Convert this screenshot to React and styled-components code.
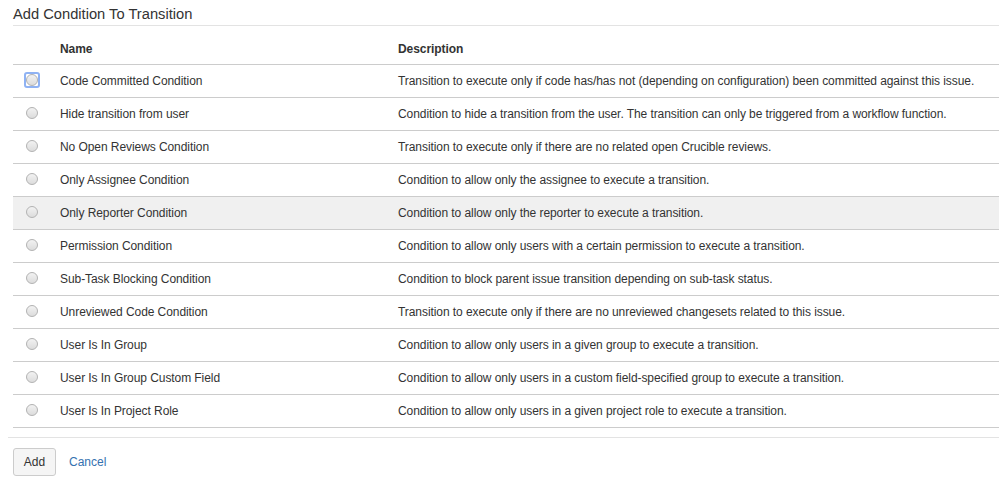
import React from "react";
import styled, { createGlobalStyle } from "styled-components";

const GlobalStyle = createGlobalStyle`
  body {
    margin: 0;
    background: #fff;
    font-family: Arial, "Liberation Sans", sans-serif;
    color: #333;
  }
`;

const conditions = [
  {
    name: "Code Committed Condition",
    text: "Transition to execute only if code has/has not (depending on configuration) been committed against this issue.",
  },
  {
    name: "Hide transition from user",
    text: "Condition to hide a transition from the user. The transition can only be triggered from a workflow function.",
  },
  {
    name: "No Open Reviews Condition",
    text: "Transition to execute only if there are no related open Crucible reviews.",
  },
  {
    name: "Only Assignee Condition",
    text: "Condition to allow only the assignee to execute a transition.",
  },
  {
    name: "Only Reporter Condition",
    text: "Condition to allow only the reporter to execute a transition.",
  },
  {
    name: "Permission Condition",
    text: "Condition to allow only users with a certain permission to execute a transition.",
  },
  {
    name: "Sub-Task Blocking Condition",
    text: "Condition to block parent issue transition depending on sub-task status.",
  },
  {
    name: "Unreviewed Code Condition",
    text: "Transition to execute only if there are no unreviewed changesets related to this issue.",
  },
  {
    name: "User Is In Group",
    text: "Condition to allow only users in a given group to execute a transition.",
  },
  {
    name: "User Is In Group Custom Field",
    text: "Condition to allow only users in a custom field-specified group to execute a transition.",
  },
  {
    name: "User Is In Project Role",
    text: "Condition to allow only users in a given project role to execute a transition.",
  },
];

const Page = styled.div`
  padding: 0 0 0 8px;
`;

const Inner = styled.div`
  padding-left: 5px;
`;

const Title = styled.h2`
  margin: 0;
  height: 26px;
  box-sizing: border-box;
  padding-top: 6px;
  font-size: 14.7px;
  line-height: 16px;
  font-weight: normal;
  color: #333;
  border-bottom: 1px solid #e3e3e3;
`;

const Table = styled.table`
  width: 100%;
  border-collapse: collapse;
  font-size: 12px;
  letter-spacing: -0.07px;
`;

const HeadCell = styled.th`
  text-align: left;
  font-weight: bold;
  height: 38px;
  padding: 8px 0 0;
  box-sizing: border-box;
  border-bottom: 1px solid #ccc;
  color: #333;
  width: ${(p) => p.$w || "auto"};
`;

const Row = styled.tr`
  background: ${(p) => (p.$hover ? "#f0f0f0" : "#fff")};
  border-bottom: 1px solid #ccc;
`;

const Cell = styled.td`
  height: 32px;
  padding: 0;
  vertical-align: middle;
  color: #333;
`;

const RadioCell = styled(Cell)`
  padding-left: 13px;
`;

const Radio = styled.span`
  display: inline-block;
  box-sizing: border-box;
  width: 12px;
  height: 12px;
  border-radius: 50%;
  border: 1px solid #b3b3b3;
  background: linear-gradient(#f2f2f2, #dcdcdc);
  vertical-align: middle;
  position: relative;
  top: -1px;

  &::after {
    content: "";
    display: ${(p) => (p.$focused ? "block" : "none")};
    position: absolute;
    inset: -3px;
    border: 2px solid #8fb2f3;
    border-radius: 3px;
  }
`;

const Footer = styled.div`
  margin-top: 9px;
  border-top: 1px solid #e3e3e3;
  padding: 10px 0 0 5px;
  display: flex;
  align-items: center;
  gap: 13px;
`;

const Button = styled.button`
  font-family: Arial, "Liberation Sans", sans-serif;
  font-size: 12px;
  color: #333;
  background: #f5f5f5;
  border: 1px solid #ccc;
  border-radius: 3px;
  height: 28px;
  width: 43px;
  padding: 0;
  cursor: pointer;
`;

const CancelLink = styled.a`
  font-size: 12px;
  color: #3572b0;
  text-decoration: none;
  cursor: pointer;
`;

export default function App() {
  return (
    <Page>
      <GlobalStyle />
      <Inner>
        <Title>Add Condition To Transition</Title>
        <Table>
          <thead>
            <tr>
              <HeadCell $w="47px" />
              <HeadCell $w="338px">Name</HeadCell>
              <HeadCell>Description</HeadCell>
            </tr>
          </thead>
          <tbody>
            {conditions.map((c, i) => (
              <Row key={c.name} $hover={i === 4}>
                <RadioCell>
                  <Radio $focused={i === 0} />
                </RadioCell>
                <Cell>{c.name}</Cell>
                <Cell>{c.text}</Cell>
              </Row>
            ))}
          </tbody>
        </Table>
      </Inner>
      <Footer>
        <Button>Add</Button>
        <CancelLink>Cancel</CancelLink>
      </Footer>
    </Page>
  );
}
